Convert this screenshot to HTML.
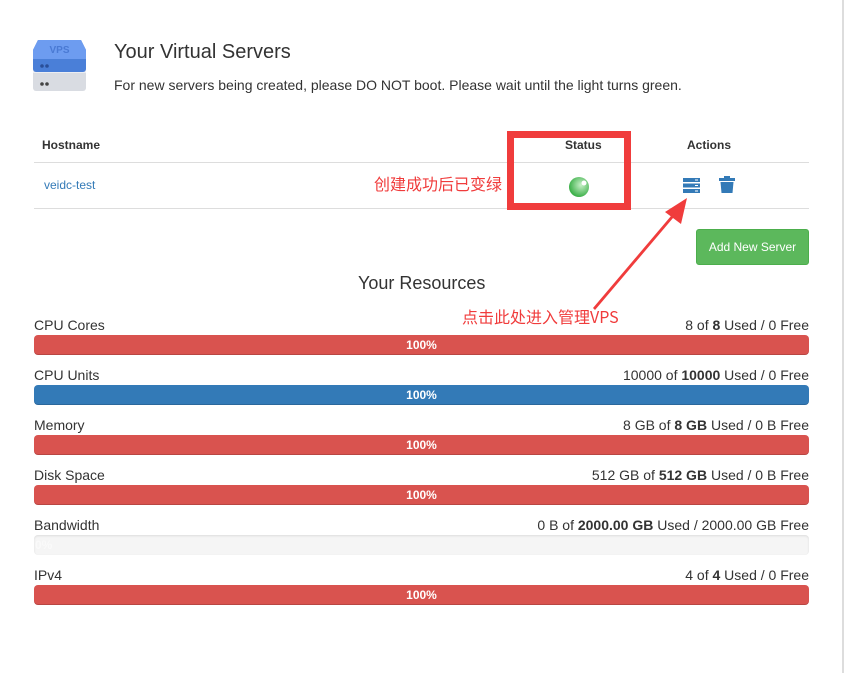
<!DOCTYPE html>
<html><head><meta charset="utf-8"><style>
*{margin:0;padding:0;box-sizing:border-box}
body{width:846px;height:673px;background:#fff;font-family:"Liberation Sans","Noto Sans CJK SC",sans-serif;color:#333;position:relative;overflow:hidden;font-size:14px}
.a{position:absolute}
.bar{position:absolute;left:34px;width:775px;height:20px;border-radius:4px;color:#fff;font-size:12px;font-weight:bold;text-align:center;line-height:20px;box-shadow:inset 0 -1px 0 rgba(0,0,0,.15)}
.red{background:#d9534f}.blue{background:#337ab7}.gray{background:#f5f5f5;box-shadow:inset 0 1px 2px rgba(0,0,0,.1)}
.lab{position:absolute;left:34px;font-size:14px}
.val{position:absolute;right:37px;font-size:14px}
.cn{color:#f03c3c;font-size:16px;font-family:"Noto Sans CJK SC","Liberation Sans",sans-serif}
</style></head><body>
<div class="a" style="right:2px;top:0;width:2px;height:673px;background:#ddd"></div>
<svg class="a" style="left:33px;top:39px" width="53" height="53" viewBox="0 0 53 53">
<rect x="0" y="30" width="53" height="22" rx="3" fill="#d9dce2"/>
<rect x="0" y="30" width="53" height="4" fill="#eceef2"/>
<path d="M5 1h43l5 10v19a3 3 0 0 1-3 3H3a3 3 0 0 1-3-3V11z" fill="#4a7fd8"/>
<path d="M5 1h43l5 10v9H0v-9z" fill="#6d9cf0"/>
<text x="26.5" y="14" font-size="10" font-weight="bold" fill="#4a7ad4" text-anchor="middle" font-family="Liberation Sans">VPS</text>
<circle cx="9" cy="27" r="1.8" fill="#2a4f99"/><circle cx="14" cy="27" r="1.8" fill="#2a4f99"/>
<circle cx="9" cy="45" r="1.8" fill="#444"/><circle cx="14" cy="45" r="1.8" fill="#444"/>
</svg>
<div class="a" style="left:114px;top:41px;font-size:20px">Your Virtual Servers</div>
<div class="a" style="left:114px;top:77px;font-size:14px">For new servers being created, please DO NOT boot. Please wait until the light turns green.</div>
<div class="a" style="left:42px;top:138px;font-size:12px;font-weight:bold">Hostname</div>
<div class="a" style="left:565px;top:138px;font-size:12px;font-weight:bold">Status</div>
<div class="a" style="left:687px;top:138px;font-size:12px;font-weight:bold">Actions</div>
<div class="a" style="left:34px;top:162px;width:775px;height:1px;background:#ddd"></div>
<div class="a" style="left:34px;top:208px;width:775px;height:1px;background:#ddd"></div>
<div class="a" style="left:44px;top:178px;font-size:12px;color:#337ab7">veidc-test</div>
<div class="a cn" style="left:374px;top:171px">创建成功后已变绿</div>
<svg class="a" style="left:569px;top:176px" width="22" height="22"><defs><radialGradient id="g" cx="0.6" cy="0.4" r="0.6"><stop offset="0" stop-color="#c8f0c8"/><stop offset="1" stop-color="#3cb049"/></radialGradient></defs><circle cx="10" cy="11" r="10" fill="url(#g)"/><circle cx="15" cy="7" r="2.5" fill="#fff"/></svg>
<div class="a" style="left:507px;top:131px;width:124px;height:79px;border:7px solid #f03c3c"></div>
<svg class="a" style="left:683px;top:178px" width="17" height="15"><rect x="0" y="0" width="17" height="4" fill="#337ab7"/><rect x="0" y="5.5" width="17" height="4" fill="#337ab7"/><rect x="0" y="11" width="17" height="4" fill="#337ab7"/><rect x="12" y="1.5" width="3" height="1" fill="#fff"/><rect x="12" y="7" width="3" height="1" fill="#fff"/><rect x="12" y="12.5" width="3" height="1" fill="#fff"/></svg>
<svg class="a" style="left:719px;top:176px" width="16" height="17"><rect x="0" y="2" width="16" height="3" fill="#337ab7"/><rect x="5" y="0" width="6" height="3" fill="#337ab7"/><path d="M1.5 6h13l-1 11h-11z" fill="#337ab7"/></svg>
<svg class="a" style="left:585px;top:190px" width="110" height="130"><path d="M8 118 L86 26 L88 28 L10 120 Z M102 8 L96 34 L80 22 Z" fill="#f03c3c"/></svg>
<div class="a" style="left:696px;top:229px;width:113px;height:36px;background:#5cb85c;border:1px solid #4cae4c;border-radius:3px;color:#fff;font-size:12px;text-align:center;line-height:34px">Add New Server</div>
<div class="a" style="left:358px;top:273px;font-size:18px">Your Resources</div>
<div class="a cn" style="left:462px;top:304px">点击此处进入管理VPS</div>

<div class="lab" style="top:317px">CPU Cores</div><div class="val" style="top:317px">8 of <b>8</b> Used / 0 Free</div>
<div class="bar red" style="top:335px">100%</div>
<div class="lab" style="top:367px">CPU Units</div><div class="val" style="top:367px">10000 of <b>10000</b> Used / 0 Free</div>
<div class="bar blue" style="top:385px">100%</div>
<div class="lab" style="top:417px">Memory</div><div class="val" style="top:417px">8 GB of <b>8 GB</b> Used / 0 B Free</div>
<div class="bar red" style="top:435px">100%</div>
<div class="lab" style="top:467px">Disk Space</div><div class="val" style="top:467px">512 GB of <b>512 GB</b> Used / 0 B Free</div>
<div class="bar red" style="top:485px">100%</div>
<div class="lab" style="top:517px">Bandwidth</div><div class="val" style="top:517px">0 B of <b>2000.00 GB</b> Used / 2000.00 GB Free</div>
<div class="bar gray" style="top:535px;text-align:left;color:#fafafa;padding-left:1px">0%</div>
<div class="lab" style="top:567px">IPv4</div><div class="val" style="top:567px">4 of <b>4</b> Used / 0 Free</div>
<div class="bar red" style="top:585px">100%</div>
</body></html>
